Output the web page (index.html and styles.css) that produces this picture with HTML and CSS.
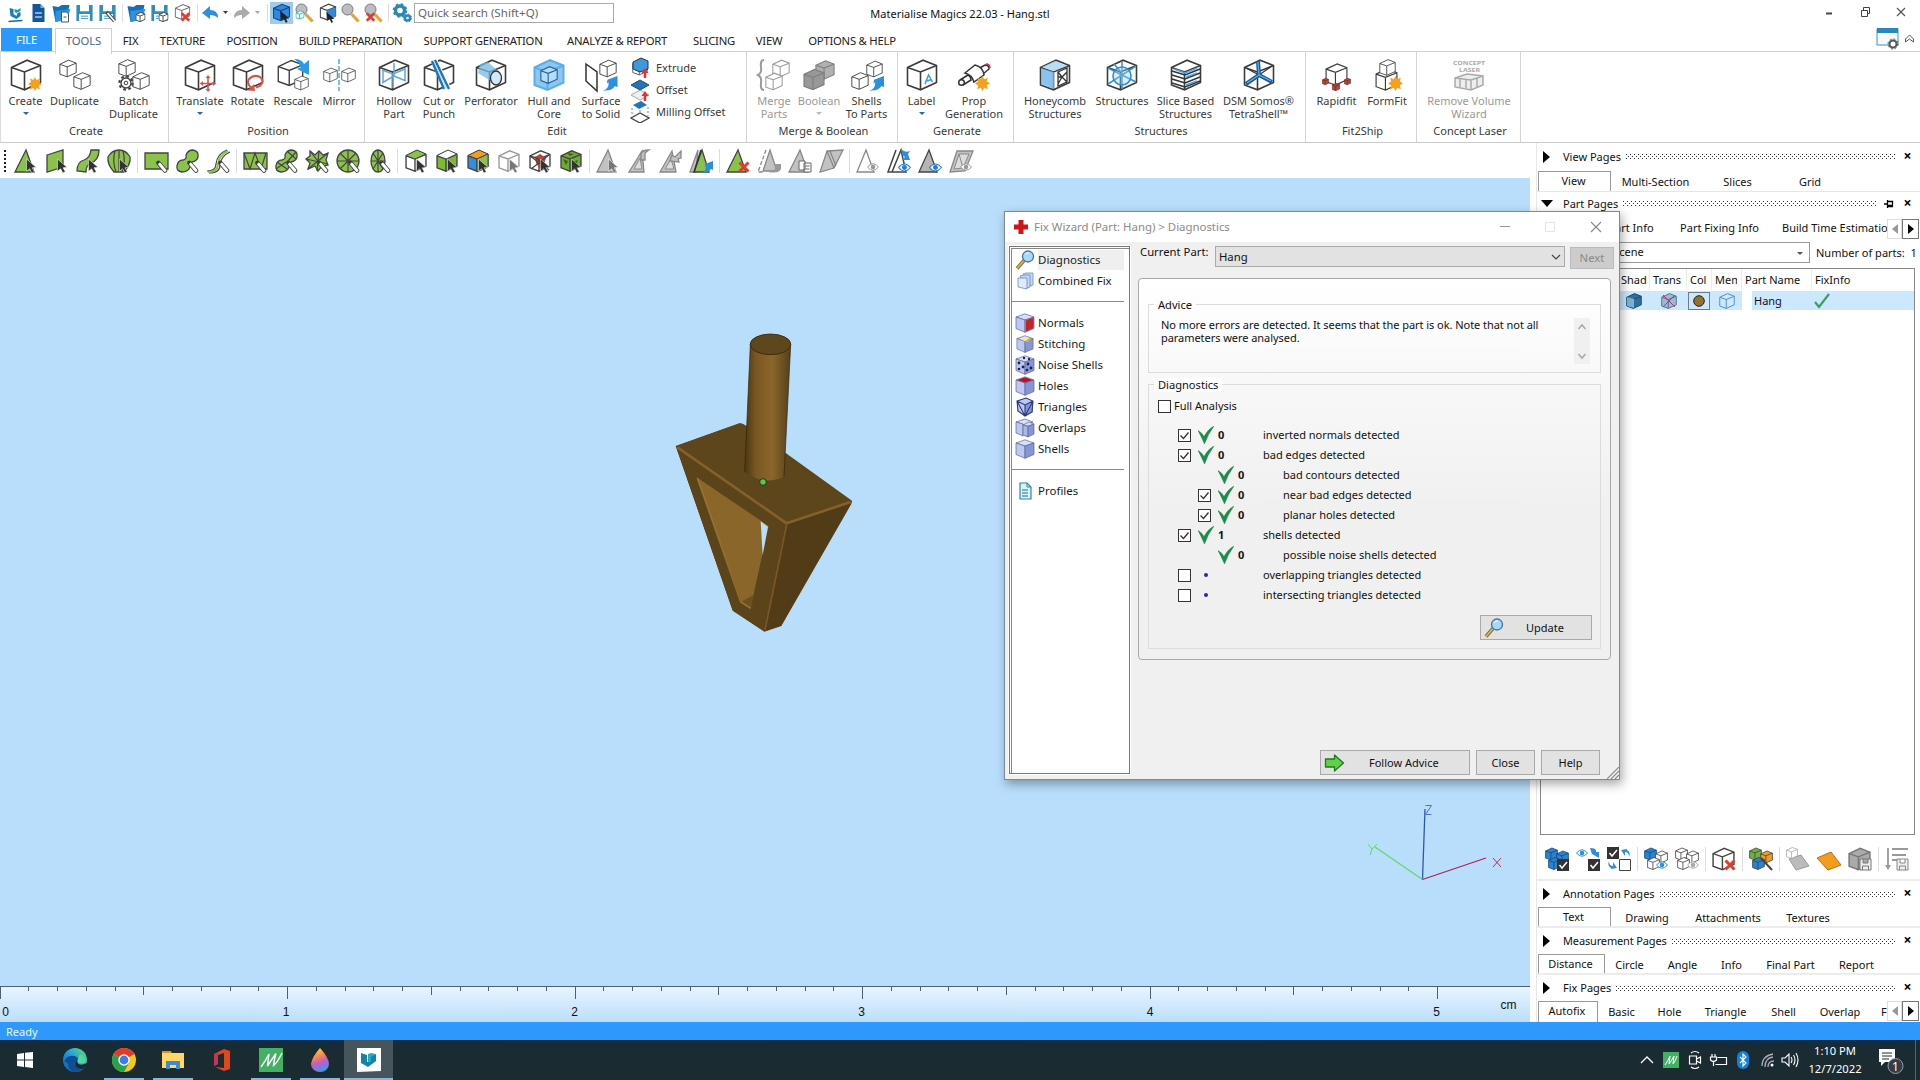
FILE: index.html
```html
<!DOCTYPE html>
<html lang="en">
<head>
<meta charset="utf-8">
<title>Materialise Magics 22.03 - Hang.stl</title>
<link rel="stylesheet" href="styles.css">
</head>
<body>
<svg class="defs" width="0" height="0">
  <defs>
    <symbol id="cube" viewBox="0 0 32 32"><path d="M1.500 8.500L17 1.200 30.500 6.500V23.500L14.500 30.800 1.500 26Z"/><path fill="none" d="M1.500 8.500L14.500 13 30.500 6.500M14.500 13V30.800"/></symbol>
    <symbol id="burst" viewBox="0 0 14 14"><path fill="#f5a11d" stroke="none" d="M7 0l1.500 3L12 1.600 11 5l3 2-3 1.700L12 12.400 8.700 11 7 14 5.400 11 2 12.400 3 8.800 0 7l3-2L2 1.600 5.500 3z"/></symbol>
    <symbol id="cur" viewBox="0 0 24 24"><path fill="#333" stroke="#fff" stroke-width=".5" d="M12.500 10l9.500 8.300-4 .5 2.300 4-2.500 1.100-2.100-4.100-3.200 2.500z"/></symbol>
    <symbol id="curg" viewBox="0 0 24 24"><path fill="#777" stroke="#fff" stroke-width=".5" d="M12.500 10l9.500 8.300-4 .5 2.300 4-2.500 1.100-2.100-4.100-3.200 2.500z"/></symbol>
    <symbol id="pen" viewBox="0 0 24 24"><path d="M14.500 14l6.500 7.500" stroke="#444" stroke-width="4.600" stroke-linecap="round"/><path d="M15.500 15l5.500 6.500" stroke="#fff" stroke-width="2.800" stroke-linecap="round"/><path d="M12.500 12l3 1.200-1.600 1.700z" fill="#333" stroke="none"/></symbol>
    <symbol id="eye" viewBox="0 0 12 8"><path d="M.5 4Q6-2.500 11.500 4 6 10.500 .5 4Z" fill="#fff" stroke="currentColor"/><circle cx="6" cy="4" r="2.300" fill="currentColor" stroke="none"/></symbol>
    <symbol id="redx" viewBox="0 0 12 12"><path d="M1.500 1.500l9 9M10.500 1.500l-9 9" stroke="#e23b30" stroke-width="3" fill="none"/></symbol>
    <symbol id="swirl" viewBox="0 0 12 12"><path d="M0 11.500Q5 11 5 5L3.500 6 4 3 12 0V9L10 8Q7 12.500 0 11.500Z" fill="#2b8fdd" stroke="none"/></symbol>
    <symbol id="floppy" viewBox="0 0 20 20"><path d="M1 1h18v18H1z" fill="#2f8cc4" stroke="none"/><path d="M5 1h10v7H5zM4 11h12v8H4z" fill="#fff" stroke="none"/><path d="M6 13.500h8M6 16h8" stroke="#2f8cc4"/></symbol>
    <symbol id="folder" viewBox="0 0 20 20"><path d="M1 3l6 1 3-2h8l-3 14-11 3z" fill="#1670b8" stroke="none"/><path d="M4 8l15-2-4 11-11 2z" fill="#2f92dc" stroke="none"/></symbol>
    <symbol id="lens" viewBox="0 0 20 20"><path d="M11 11l7 7.500" stroke="#e8a23a" stroke-width="3.200"/><circle cx="7" cy="6.500" r="5.500" fill="#b9bec2" stroke="#777"/></symbol>
    <symbol id="check" viewBox="0 0 16 18"><path d="M0 4.500Q4 6.500 6 10.500 10 3 16 0 10 8 6.500 18 3.500 11 0 4.500Z" fill="#1f8a4c" stroke="#1f8a4c" stroke-width=".5"/></symbol>
    <symbol id="scube" viewBox="0 0 20 20"><path d="M1 4L10 .8 19 4 10 7z" fill="#d7def5" stroke="#5a6596" stroke-width=".7"/><path d="M1 4l9 3v12.300L1 15.500z" fill="#bcc8f2" stroke="#5a6596" stroke-width=".7"/><path d="M19 4l-9 3v12.300l9-3.800z" fill="#8795d6" stroke="#5a6596" stroke-width=".7"/></symbol>
    <symbol id="wand" viewBox="0 0 20 20"><path d="M2 18.500l7-8" stroke="#7c6a3c" stroke-width="3.500"/><path d="M2 18.500l7-8" stroke="#d6b65c" stroke-width="1.800"/><circle cx="13" cy="6.500" r="5.500" fill="#a9d8f6" stroke="#3c78a8" stroke-width="1.300"/><path d="M10 5q1.500-2.500 4-2" stroke="#fff" fill="none"/></symbol>
    <symbol id="tick" viewBox="0 0 13 13"><path d="M1.500 5.500l3 3 5-6" fill="none" stroke="#333" stroke-width="1.300"/></symbol>
    <linearGradient id="rod" x1="0" x2="1"><stop offset="0" stop-color="#4a3613"/><stop offset=".25" stop-color="#7a5822"/><stop offset=".6" stop-color="#8b662b"/><stop offset="1" stop-color="#54401a"/></linearGradient>
    <linearGradient id="sky" x1="0" y1="0" x2="0" y2="1"><stop offset="0" stop-color="#e9f5fe"/><stop offset="1" stop-color="#bbdefb"/></linearGradient>
    <linearGradient id="edge" x1="0" y1="1" x2="1" y2="0"><stop offset="0" stop-color="#0c59a4"/><stop offset=".5" stop-color="#1d9be0"/><stop offset="1" stop-color="#6ee36a"/></linearGradient>
    <linearGradient id="drop" x1=".3" y1="0" x2=".6" y2="1"><stop offset="0" stop-color="#ffd34d"/><stop offset=".35" stop-color="#f58a4b"/><stop offset=".6" stop-color="#c45bc4"/><stop offset="1" stop-color="#2f9df0"/></linearGradient>
  </defs>
</svg>

<div class="app">
  <header class="titlebar">
    <div class="quick">
      <svg class="i20" viewBox="0 0 20 20"><path d="M4 5l4 1v5l3 2 1-3 3-1v4l-4 3-6-3z" fill="#1a7fb0"/><path d="M9 6l3 1 3-2v3l-4 2-2-1z" fill="#19a3b5"/><path d="M3 18.500l14-1" stroke="#1668a8" stroke-width="1.500"/></svg>
      <svg class="i20" viewBox="0 0 20 20"><path d="M4 1h8l4 4v14H4z" fill="#12579b"/><path d="M12 1v4h4z" fill="#7db4e0"/><path d="M6.500 10h7M6.500 14h7" stroke="#fff"/></svg>
      <svg class="i20" viewBox="0 0 20 20"><use href="#folder"/><path d="M10 9h5l2 2v8h-7z" fill="#fff" stroke="#555"/><path d="M12 14h3" stroke="#555"/></svg>
      <svg class="i20" viewBox="0 0 20 20"><use href="#floppy" x="1" width="18"/></svg>
      <svg class="i20" viewBox="0 0 20 20"><use href="#floppy" x="1" width="18"/><path d="M9 9l8 9" stroke="#444" stroke-width="3.500"/><path d="M10 10l7 8" stroke="#fff" stroke-width="1.800"/></svg>
      <i class="qsep"></i>
      <svg class="i20" viewBox="0 0 20 20"><use href="#folder"/><use href="#cube" x="9" y="9" width="10" height="10" fill="#fff" stroke="#444" stroke-width="3"/></svg>
      <svg class="i20" viewBox="0 0 20 20"><use href="#floppy" x="1" width="18"/><use href="#cube" x="9" y="9" width="10" height="10" fill="#fff" stroke="#444" stroke-width="3"/></svg>
      <svg class="i20" viewBox="0 0 20 20"><use href="#cube" x="2" y="0" width="16" height="18" fill="#fff" stroke="#666" stroke-width="2"/><use href="#redx" x="8" y="9" width="10" height="10"/></svg>
      <i class="qsep"></i>
      <svg class="undo" viewBox="0 0 30 20"><path d="M1 10L9 3v4q8 0 8 8-3-3-8-3v4z" fill="#2d8fd8"/><path d="M22 8h5l-2.500 3z" fill="#246"/></svg>
      <svg class="undo" viewBox="0 0 30 20"><path d="M17 10L9 3v4q-8 0-8 8 3-3 8-3v4z" fill="#aaa"/><path d="M22 8h5l-2.500 3z" fill="#aaa"/></svg>
      <i class="qsep"></i>
      <svg class="i20 on" viewBox="0 0 20 20"><use href="#cube" x="2" y="1" width="16" height="17" fill="#2c8be0" stroke="#124a86" stroke-width="2"/><path d="M9 8l8 7h-3l1.500 3-1.500 1-2-4-2 2z" fill="#222"/></svg>
      <svg class="i20" viewBox="0 0 20 20"><use href="#lens"/><use href="#cube" x="1" y="7" width="9" height="10" fill="#dff" stroke="#4aa" stroke-width="3"/></svg>
      <svg class="i20" viewBox="0 0 20 20"><use href="#cube" x="2" y="0" width="17" height="18" fill="#fff" stroke="#444" stroke-width="2.200"/><path d="M10 7.500l8-3v8.500l-8 4z" fill="#2c8be0"/><path d="M9 9l8 7h-3l1.500 3-1.500 1-2-4-2 2z" fill="#222"/></svg>
      <svg class="i20" viewBox="0 0 20 20"><use href="#lens"/></svg>
      <svg class="i20" viewBox="0 0 20 20"><use href="#lens"/><use href="#redx" x="2" y="9" width="10" height="10"/></svg>
      <i class="qsep"></i>
      <svg class="i20" viewBox="0 0 20 20"><circle cx="7.500" cy="7.500" r="4.500" fill="none" stroke="#2a87bd" stroke-width="3.500"/><circle cx="7.500" cy="7.500" r="6.300" fill="none" stroke="#2a87bd" stroke-width="2" stroke-dasharray="2.500 2.450"/><circle cx="15" cy="15" r="2.600" fill="none" stroke="#2a87bd" stroke-width="2.500"/><circle cx="15" cy="15" r="4" fill="none" stroke="#2a87bd" stroke-dasharray="1.500 1.640"/></svg>
    </div>
    <div class="search">Quick search (Shift+Q)</div>
    <div class="apptitle">Materialise Magics 22.03 - Hang.stl</div>
    <svg class="winctl" viewBox="0 0 92 20"><path d="M1 10.500h6" stroke="#444" stroke-width="2"/><path d="M36.500 7.500h6v6h-6zM38.500 7V4.500h6v6H43" fill="none" stroke="#444"/><path d="M72 5l8 8M80 5l-8 8" stroke="#555" stroke-width="1.200"/></svg>
  </header>

  <nav class="tabs">
    <b class="file">FILE</b><b class="cur">TOOLS</b><b>FIX</b><b>TEXTURE</b><b>POSITION</b><b class="tight">BUILD PREPARATION</b><b>SUPPORT GENERATION</b><b>ANALYZE &amp; REPORT</b><b>SLICING</b><b>VIEW</b><b>OPTIONS &amp; HELP</b>
    <svg class="tabctl" viewBox="0 0 44 24"><path d="M1 1h21v16H1z" fill="#f6fafd" stroke="#3f93c4"/><path d="M1 0h21v5H1z" fill="#2a87bd"/><circle cx="17" cy="16" r="3.500" fill="#fff" stroke="#555" stroke-width="2"/><circle cx="17" cy="16" r="5" fill="none" stroke="#555" stroke-dasharray="2 1.900"/><path d="M29.500 11l4-4 4 4v3l-4-3-4 3z" fill="#fff" stroke="#555"/></svg>
  </nav>

  <section class="ribbon">
    <div class="grp g1">
      <div class="btns">
        <div class="btn"><svg viewBox="0 0 32 32"><use class="k" href="#cube"/><use href="#burst" x="18" y="18" width="14" height="14"/></svg><span>Create</span><i class="car"></i></div>
        <div class="btn"><svg viewBox="0 0 32 32"><use class="k" href="#cube" width="18" height="19"/><use class="k" href="#cube" x="14" y="12" width="18" height="20"/></svg><span>Duplicate</span></div>
        <div class="btn"><svg viewBox="0 0 32 32"><use class="k" href="#cube" width="18" height="18"/><use class="k" href="#cube" x="14" y="12" width="18" height="20"/><circle cx="8" cy="24" r="5" fill="#fff" stroke="#444" stroke-width="1.400"/><circle cx="8" cy="24" r="6.600" fill="none" stroke="#444" stroke-width="2.200" stroke-dasharray="2.700 2.480"/><circle cx="8" cy="24" r="1.800" fill="#fff" stroke="#444"/></svg><span>Batch<br>Duplicate</span></div>
      </div><div class="cap">Create</div>
    </div>
    <div class="grp g2">
      <div class="btns">
        <div class="btn"><svg viewBox="0 0 32 32"><use class="k" href="#cube"/><path d="M24 17v15M16.500 24.500h15" stroke="#d9534a" stroke-width="1.600"/><path d="M24 16l-2.500 3h5zM24 33l-2.500-3h5zM16 24.500l3-2.500v5zM32 24.500l-3-2.500v5z" fill="#d9534a"/></svg><span>Translate</span><i class="car"></i></div>
        <div class="btn"><svg viewBox="0 0 32 32"><use class="k" href="#cube"/><path d="M20 29Q14 25 17 20 22 15 28 18 33 22 28 27L24 28.500" fill="none" stroke="#d9534a" stroke-width="2"/><path d="M16 31.500l7 .5-1-7z" fill="#d9534a"/></svg><span>Rotate</span></div>
        <div class="btn"><svg viewBox="0 0 32 32"><use class="k" href="#cube" width="27" height="28"/><use class="k" href="#cube" x="17" y="16" width="15" height="16"/><path d="M17 0q8 0 10 5l5-4v15L20 10l4-2q-2-5-7-8z" fill="#2b99ee"/></svg><span>Rescale</span></div>
        <div class="btn"><svg viewBox="0 0 32 32"><use class="k" href="#cube" y="7" width="15" height="18"/><use class="k" href="#cube" x="18" y="7" width="15" height="18"/><path d="M16 0v32" stroke="#49a3cf" stroke-width="1.400" stroke-dasharray="5 2"/></svg><span>Mirror</span></div>
      </div><div class="cap">Position</div>
    </div>
    <div class="grp g3">
      <div class="btns">
        <div class="btn"><svg viewBox="0 0 32 32"><use class="k" href="#cube"/><path d="M4 11l11 4 12-5M15 15v14M16 4v13L4 24M16 17l12 5M5 10v14M27 9v13" stroke="#61a9d4" stroke-width="1.500" fill="none"/></svg><span>Hollow<br>Part</span></div>
        <div class="btn"><svg viewBox="0 0 32 32"><use class="k" href="#cube"/><path d="M7 1l14 30h8L14 0z" fill="#fff"/><path d="M9 2l12 28M12 1l14 29" stroke="#1f76b4" stroke-width="2.400"/><path d="M10.500 1.500l13 28" stroke="#9fd0f0"/></svg><span>Cut or<br>Punch</span></div>
        <div class="btn"><svg viewBox="0 0 32 32"><use class="k" href="#cube"/><path d="M5 5l8-2 12 11-6 10L3 14z" fill="#74b9e8" opacity=".75"/><ellipse cx="21" cy="19" rx="5.500" ry="7" fill="#cfe8fa" stroke="#333" stroke-width="1.300"/></svg><span>Perforator</span></div>
        <div class="btn"><svg viewBox="0 0 32 32"><use href="#cube" fill="#8cc6f2" stroke="#5aaeea" stroke-width="2"/><use href="#cube" x="7" y="6.500" width="18" height="19" fill="#b5dcf8" stroke="#27638f" stroke-width="2"/></svg><span>Hull and<br>Core</span></div>
        <div class="btn"><svg viewBox="0 0 32 32"><path d="M1 5l11 8v19L1 22z" fill="#fff" stroke="#333" stroke-width="1.500"/><use class="k" href="#cube" x="14" width="18" height="19"/><use href="#swirl" x="17" y="17" width="16" height="15"/></svg><span>Surface<br>to Solid</span></div>
        <div class="list">
          <div><svg viewBox="0 0 20 22"><use class="k" href="#cube" x="2" width="16" height="21"/><path d="M3 5l8-4 7 3v8l-8 3-7-3z" fill="#3f97dc" stroke="#234"/><path d="M15 21v-6" stroke="#d33" stroke-width="2.500"/><path d="M11.500 16l3.500-5 3.500 5z" fill="#d33"/></svg>Extrude</div>
          <div><svg viewBox="0 0 20 22"><path d="M1 16l9-5 9 5-9 5z" fill="#eee" stroke="#aaa"/><path d="M1 6l9-5 9 5-9 5z" fill="#2773b8" stroke="#1a4f82"/><path d="M15 22v-6" stroke="#d33" stroke-width="2.500"/><path d="M11.500 17l3.500-5 3.500 5z" fill="#d33"/></svg>Offset</div>
          <div><svg viewBox="0 0 20 22"><path d="M1 17l9-5 9 5-9 5z" fill="#fff" stroke="#444" stroke-width="1.300"/><path d="M3 4l8-4 6 4-8 4z" fill="#2773b8"/><path d="M2 7v8M18 6v9M10 9v3" stroke="#3f97dc" stroke-dasharray="2 2"/></svg>Milling Offset</div>
        </div>
      </div><div class="cap">Edit</div>
    </div>
    <div class="grp g4">
      <div class="btns">
        <div class="btn dis"><svg viewBox="0 0 32 32"><path d="M6 1Q2 1 3 8 4 14 0 16q4 2 3 8-1 7 3 7" fill="none" stroke="#999" stroke-width="2"/><use class="g" href="#cube" x="14" width="18" height="19"/><use class="g" href="#cube" x="7" y="13" width="18" height="19"/></svg><span>Merge<br>Parts</span></div>
        <div class="btn dis"><svg viewBox="0 0 32 32"><g fill="#b0b0b0" stroke="#808080" stroke-width="1.800"><use href="#cube" x="12" width="20" height="22"/><use href="#cube" y="9" width="22" height="23" fill="#989898"/></g></svg><span>Boolean</span><i class="car"></i></div>
        <div class="btn"><svg viewBox="0 0 32 32"><use class="k" href="#cube" x="15" width="17" height="20"/><use class="k" href="#cube" y="12" width="18" height="20"/><use href="#swirl" x="18" y="17" width="15" height="15"/></svg><span>Shells<br>To Parts</span></div>
      </div><div class="cap">Merge &amp; Boolean</div>
    </div>
    <div class="grp g5">
      <div class="btns">
        <div class="btn"><svg viewBox="0 0 32 32"><use class="k" href="#cube"/><path d="M19 25l3.500-9 4 7M20.500 22l5-1.500" fill="none" stroke="#3f9ad6" stroke-width="1.500"/></svg><span>Label</span><i class="car"></i></div>
        <div class="btn"><svg viewBox="0 0 32 32"><g fill="#fff" stroke="#333" stroke-width="1.500"><path d="M20 10l7-4q4 0 4 4l-6 5"/><path d="M7 14L17 6q8 2 9 10l-10 7q-2-7-9-9z"/><path d="M2 21l8-5q3 2 3 5l-8 5"/><circle cx="3.500" cy="23.500" r="2.800"/></g><path d="M28 5q4 0 4 4" stroke="#c33" fill="none" stroke-width="1.500"/><use href="#burst" x="17" y="17" width="15" height="15"/></svg><span>Prop<br>Generation</span></div>
      </div><div class="cap">Generate</div>
    </div>
    <div class="grp g6">
      <div class="btns">
        <div class="btn"><svg viewBox="0 0 32 32"><use class="k" href="#cube"/><path d="M2 9l13 4v17L2 25z" fill="#6db5ea" opacity=".8"/><path d="M3 8l13-6 12 5-13 5z" fill="#a9d5f5" opacity=".8"/><path d="M19 13l9-4v14l-9 4zM19 18l4 0 5-5M23 18l5 5M23 18l-4 7M19 13l4 5" fill="#fff" stroke="#333" stroke-width="1.300"/></svg><span>Honeycomb<br>Structures</span></div>
        <div class="btn"><svg viewBox="0 0 32 32"><use class="k" href="#cube"/><path d="M2 9l28 14M30 7L2 25M15 13l-7-8M16 2v28" stroke="#2e90cc" stroke-width="1.500" fill="none"/><circle cx="16" cy="17" r="9" fill="#9fd2f3" fill-opacity=".4" stroke="#2e90cc" stroke-width="1.600"/></svg><span>Structures</span></div>
        <div class="btn"><svg viewBox="0 0 32 32"><use class="k" href="#cube"/><path d="M2 12l13 4 15-6M2 16l13 4 15-6M2 20l13 4 15-6M2 24l13 4 15-6" stroke="#333" stroke-width="1.500" fill="none"/><path d="M4 10l11 4 12-5M16 18l11-4M16 26l11-4" stroke="#4ba3dd" stroke-width="1.500" fill="none"/></svg><span>Slice Based<br>Structures</span></div>
        <div class="btn"><svg viewBox="0 0 32 32"><use href="#cube" class="k"/><path d="M3 9l13 7L29 7M3 25l13-9 12 7" stroke="#333" stroke-width="1.200" fill="none"/><path d="M15 2l1 14L3 25M16 16l13 7" stroke="#1d5a94" stroke-width="4" fill="none"/><path d="M15 3l1 13L4 24M16 16l12 6" stroke="#5db0ea" stroke-width="1.200" fill="none"/></svg><span>DSM Somos®<br>TetraShell™</span></div>
      </div><div class="cap">Structures</div>
    </div>
    <div class="grp g7">
      <div class="btns">
        <div class="btn"><svg viewBox="0 0 32 32"><use class="k" href="#cube" x="4" y="4" width="23" height="23"/><g fill="#b9443e" stroke="#6d211e" stroke-width="2.500"><use href="#cube" x="1" y="18" width="7" height="9"/><use href="#cube" x="11" y="24" width="8" height="8"/><use href="#cube" x="23" y="18" width="7" height="9"/></g></svg><span>Rapidfit</span></div>
        <div class="btn"><svg viewBox="0 0 32 32"><use class="k" href="#cube" x="1" y="9" width="29" height="23"/><use class="k" href="#cube" x="8" width="17" height="17"/><use href="#burst" x="17" y="17" width="15" height="15"/></svg><span>FormFit</span></div>
      </div><div class="cap">Fit2Ship</div>
    </div>
    <div class="grp g8">
      <div class="btns">
        <div class="btn dis"><svg viewBox="0 0 32 32"><text class="cl" x="0" y="6" textLength="32" lengthAdjust="spacingAndGlyphs">CONCEPT</text><text class="cl" x="6" y="12.500" textLength="21" lengthAdjust="spacingAndGlyphs">LASER</text><path d="M2 19l12-4 16 2v9l-12 5-16-3z" fill="#eee" stroke="#aaa" stroke-width="1.500"/><path d="M2 19l16 2 12-4M18 21v10M7 20v8M13 21v8M24 19v9" stroke="#aaa" stroke-width="1.500" fill="none"/></svg><span>Remove Volume<br>Wizard</span></div>
      </div><div class="cap">Concept Laser</div>
    </div>
  </section>

  <main class="work">
    <div class="left">
      <div class="toolbar">
        <i class="grip"></i>
        <svg class="t"><path class="gr" d="M12 1L1 23H20z"/><use href="#cur"/></svg>
        <svg class="t"><path class="gr" d="M2 6L18 1V18L2 23z"/><use href="#cur"/></svg>
        <svg class="t"><path class="gr" d="M1 22q0-9 7-11Q14 9 15 1h8q0 10-8 13-5 2-5 9z"/><use href="#cur"/></svg>
        <svg class="t"><path class="gr" d="M7 23Q0 15 1 8 5 1 12 1t11 7q1 7-6 15z"/><path class="gl" d="M9 23Q5 12 8 2M15 23q4-11 1-21M12 1v22"/><use href="#cur"/></svg>
        <i class="sep"></i>
        <svg class="t"><path class="gr" d="M1 4H24V20H1z"/><use href="#pen"/></svg>
        <svg class="t"><path class="gr" d="M11 6q2-5 7-5 6 1 5 7-1 4-6 5-2 1-2 5-2 5-8 5-6-1-5-6 1-6 6-6 4-1 3-5z"/><use href="#pen"/></svg>
        <svg class="t"><path class="gl" d="M1 22q9 0 9-7 1-10 11-14M3 24q11 0 11-8Q15 7 24 3"/><path d="M2 23q10 0 10-8 1-9 10-13" stroke="#8bc34a" stroke-width="2" fill="none"/><use href="#pen"/></svg>
        <i class="sep"></i>
        <svg class="t"><path class="gr" d="M1 4H24V20H1z"/><path class="gl" d="M1 4l6 16L12 4l6 16 5-16"/><use href="#pen"/></svg>
        <svg class="t"><path class="gr" d="M11 6q2-5 7-5 6 1 5 7-1 4-6 5-2 1-2 5-2 5-8 5-6-1-5-6 1-6 6-6 4-1 3-5z"/><path class="gl" d="M14 3l8 7M22 3l-9 10M3 13l10 7M2 20l10-7"/><use href="#pen"/></svg>
        <svg class="t"><path class="gr" d="M5 2l5 4 4-4 4 4 5-2-2 7 2 5-6 1-4 5-3-5-7 3 2-6-4-4 4-3z"/><path class="gl" d="M5 2l14 18M23 4L3 20M1 10l22 5M14 2l-2 20"/><use href="#pen"/></svg>
        <svg class="t"><circle class="gr" cx="12" cy="12" r="11"/><path class="gl" d="M12 1v22M1 12h22M4 4l16 16M20 4L4 20"/><use href="#pen"/></svg>
        <svg class="t"><ellipse class="gr" cx="11" cy="12" rx="7" ry="11"/><path class="gl" d="M11 1v22M4 12h14M6 4l10 16M16 4L6 20"/><use href="#pen"/></svg>
        <i class="sep"></i>
        <svg class="t"><use href="#cube" x="1" width="22" height="24" fill="#fff" class="kt"/><path d="M2 6.500L13 1l9 4-11 5z" fill="#8bc34a" stroke="#444"/><use href="#cur"/></svg>
        <svg class="t"><use href="#cube" x="1" width="22" height="24" fill="#7cb83a" class="kt"/><path d="M2 6.500L13 1l9 4-11 5z" fill="#fff" stroke="#444"/><use href="#cur"/></svg>
        <svg class="t"><use href="#cube" x="1" width="22" height="24" fill="#2f8fdd" class="kt"/><path d="M2 6.500L13 1l9 4-11 5z" fill="#f39c1f" stroke="#444"/><path d="M11 10l11-5v13l-11 5z" fill="#8bc34a" stroke="#444"/><use href="#cur"/></svg>
        <svg class="t"><use href="#cube" x="1" width="22" height="24" fill="#fff" stroke="#999" stroke-width="2"/><use href="#curg"/></svg>
        <svg class="t"><use href="#cube" x="1" width="22" height="24" fill="#fff" class="kt"/><path d="M7 8l5-3 6 4-2 6-4 5-4-6z" fill="#b5462f"/><path class="gl" d="M2 7l19 14M21 6L3 20M7 8l9 7"/><use href="#cur"/></svg>
        <svg class="t"><use href="#cube" x="1" width="22" height="24" fill="#6eaa35" class="kt"/><path d="M4 10l5 2-2 4zM14 13l5-2-3 7zM8 4l7 1-4 2z" fill="#3d5f22"/><use href="#cur"/></svg>
        <i class="sep"></i>
        <svg class="t"><path class="dg" d="M12 1L1 23H20z"/><use href="#curg"/></svg>
        <svg class="t"><path class="dg" d="M15 2L2 23H17z"/><path d="M13 9L7 20h8z" fill="#ddd" stroke="#888"/><path class="dg" d="M14 11V5q1-4 8-4l-4 3v7z"/></svg>
        <svg class="t"><path class="dg" d="M14 2L2 23H18z"/><path d="M13 10L7 20h9z" fill="#ddd" stroke="#888"/><path class="dg" d="M12 12l2-6 3 2 6-6v7l-3 1 1 3z"/></svg>
        <svg class="t"><path class="dg" d="M9 1L1 23h6z"/><path class="gr" d="M13 1L5 23h15z"/><path d="M12 1L5 23" stroke="#333" stroke-width="1.500"/><use href="#swirl" x="12" y="12" width="12" height="12"/></svg>
        <i class="sep"></i>
        <svg class="t"><path class="gr" d="M12 1L1 23H20z"/><use href="#redx" x="12" y="12" width="12" height="12"/></svg>
        <svg class="t"><path class="dg" d="M13 1L6 22h14z"/><path d="M9 1L1 23h5" fill="none" stroke="#888" stroke-width="1.300" stroke-dasharray="4 2"/><path d="M11 23q9 0 7-8h6v5q-2 5-13 3z" fill="#999"/></svg>
        <svg class="t"><path class="dg" d="M12 1L1 23H20z"/><path d="M11 12h6v9h-6zM16 14h7v9h-7z" fill="#fff" stroke="#666"/><path d="M17.500 17h4M17.500 20h4" stroke="#666"/></svg>
        <svg class="t"><path class="dg" d="M8 2L24 1 15 19 1 23z"/><path d="M8 2l7 17M11 2l6 15" stroke="#777" fill="none"/></svg>
        <i class="sep"></i>
        <svg class="t"><path d="M10 1L1 23H18z" fill="#fff" stroke="#888" stroke-width="1.300"/><use href="#eye" x="11" y="14" width="12" height="8" color="#999"/></svg>
        <svg class="t"><path d="M9 1L1 23h5M14 1L5 23h14z" fill="#fff" stroke="#444" stroke-width="1.500"/><path d="M14 0q4 4 9 2l-2 3 2 6h-8l3-3q-4-2-4-8z" fill="#2b8fdd"/><use href="#eye" x="11" y="14" width="13" height="9" color="#1f7fd0"/></svg>
        <svg class="t"><path d="M11 1L1 23H19z" fill="#b5b5b5" stroke="#444" stroke-width="1.300"/><use href="#eye" x="11" y="14" width="13" height="9" color="#1f7fd0"/></svg>
        <svg class="t"><path class="dg" d="M8 2H24L16 22 1 23z"/><path d="M10 5h10l-6 14-9 1z" fill="#ddd" stroke="#888"/><path d="M10 5l4 14" stroke="#888"/><use href="#eye" x="11" y="14" width="12" height="8" color="#999"/></svg>
      </div>

      <div class="viewport">
        <svg class="model" viewBox="0 0 720 1020">
          <path d="M107 408L298 340Q306 338 316 346L438 430 636 572 634 582 424 948 373 965 278 902Z" fill="#5c441b"/>
          <path d="M109 412L440 644 373 964 278 901Z" fill="#5b431a"/>
          <path d="M440 642L636 574 423 947 373 964Z" fill="#513c17"/>
          <path d="M109 408L300 340 634 574 440 640Z" fill="#5d451c"/>
          <path d="M170 502L386 648 331 898 306 880Z" fill="#8a662b"/>
          <path d="M362 634L384 650 368 736Z" fill="#b9defb"/>
          <path d="M306 874L340 856 331 900Z" fill="#6d4f20"/>
          <path d="M172 504L302 876 332 894" fill="none" stroke="#a37c3b" stroke-width="5" opacity=".7"/>
          <path d="M112 412L440 640 632 576" fill="none" stroke="#84602a" stroke-width="8" stroke-linejoin="round"/>
          <path d="M440 644L375 960" stroke="#7a5825" stroke-width="5"/>
          <path d="M331 100L452 106 432 500Q372 528 314 486Z" fill="url(#rod)"/>
          <path d="M331 104L314 486M452 106L432 500" stroke="#2f230c" stroke-width="2"/>
          <ellipse cx="391.500" cy="103" rx="61" ry="31" fill="#5f471d" stroke="#33260e" stroke-width="2.500"/>
          <circle cx="369" cy="516" r="10" fill="#58c94d" stroke="#1a3a12" stroke-width="3"/>
        </svg>
        <svg class="axes" viewBox="0 0 150 90">
          <path d="M57.500 75.500L60 5" stroke="#2b58b0" stroke-width="1.300"/><path d="M60.500 1.500h6l-6 9h6" fill="none" stroke="#4a78b8"/>
          <path d="M57.500 75.500L10 43" stroke="#61d86a" stroke-width="1.300"/><path d="M3 40l4 5 5-5M7 45l-2 6" fill="none" stroke="#61d86a"/>
          <path d="M57.500 75.500L121 54" stroke="#b02050" stroke-width="1.300"/><path d="M128 54l8 9M136 54l-8 9" fill="none" stroke="#c22a5a"/>
        </svg>
      </div>
      <svg class="ruler" viewBox="0 0 1530 36">
        <rect width="1530" height="36" fill="url(#sky)"/>
        <path d="M0 .5H1530" stroke="#4b6075"/>
        <path stroke="#4b6075" d="M.5 0v13M28.500 0v5M57.500 0v5M86.500 0v5M115.500 0v5M143.500 0v9M172.500 0v5M201.500 0v5M230.500 0v5M258.500 0v5M287.500 0v13M316.500 0v5M345.500 0v5M373.500 0v5M402.500 0v5M431.500 0v9M460.500 0v5M488.500 0v5M517.500 0v5M546.500 0v5M575.500 0v13M603.500 0v5M632.500 0v5M661.500 0v5M690.500 0v5M718.500 0v9M747.500 0v5M776.500 0v5M805.500 0v5M833.500 0v5M862.500 0v13M891.500 0v5M920.500 0v5M948.500 0v5M977.500 0v5M1006.500 0v9M1035.500 0v5M1063.500 0v5M1092.500 0v5M1121.500 0v5M1150.500 0v13M1178.500 0v5M1207.500 0v5M1236.500 0v5M1265.500 0v5M1293.500 0v9M1322.500 0v5M1351.500 0v5M1380.500 0v5M1408.500 0v5M1437.500 0v13"/>
        <g class="num"><text x="5.500" y="29.500">0</text><text x="286" y="29.500">1</text><text x="574.500" y="29.500">2</text><text x="861.500" y="29.500">3</text><text x="1150" y="29.500">4</text><text x="1436.500" y="29.500">5</text><text x="1508.500" y="23">cm</text></g>
      </svg>
    </div>

    <aside class="panel">
      <div class="sec"><i class="tri"></i>View Pages<i class="dots"></i><b>×</b></div>
      <div class="ptabs pt1"><span class="sel">View</span><span>Multi-Section</span><span>Slices</span><span>Grid</span></div>
      <div class="sec s2"><i class="tri down"></i>Part Pages<i class="dots"></i><svg class="pin" viewBox="0 0 10 10"><path d="M0 5h3M3.500 1v8M3.500 2.500h5v4h-5M3 7.500h6" fill="none" stroke="#000" stroke-width="1.300"/></svg><b>×</b></div>
      <div class="ptabs pt2"><span>Part Info</span><span>Part Fixing Info</span><span class="clip">Build Time Estimation</span><i class="arr off"><i></i></i><i class="arr"><i></i></i></div>
      <div class="filter"><div class="combo">scene<i></i></div><span>Number of parts:&nbsp; 1</span></div>
      <div class="table">
        <div class="tr th"><i></i><span>Shad</span><span>Trans</span><span>Col</span><span>Mem</span><span>Part Name</span><span>FixInfo</span></div>
        <div class="tr row"><i></i>
          <svg viewBox="0 0 16 16"><use href="#cube" width="16" height="16" fill="#2f6f9f" stroke="#1d4a70" stroke-width="2"/><path d="M1 4l7 2v9l-7-2z" fill="#7fb0d2"/></svg>
          <svg class="tr8" viewBox="0 0 16 16"><use href="#cube" width="16" height="16" fill="#9fb8d8" stroke="#5b7094" stroke-width="2"/><path d="M2 2l12 12M14 2L2 14" stroke="#a04060"/></svg>
          <svg class="col" viewBox="0 0 22 18"><rect x=".5" y=".5" width="21" height="17" fill="none" stroke="#111" stroke-dasharray="1 1"/><circle cx="11" cy="9" r="5.300" fill="#95702f" stroke="#222"/></svg>
          <svg class="mem" viewBox="0 0 16 16"><use href="#cube" width="16" height="16" fill="#cfe8fb" stroke="#4f93c8" stroke-width="2"/></svg>
          <span class="nm">Hang</span>
          <svg class="ok" viewBox="0 0 16 16"><path d="M1 9l4 5L15 1" fill="none" stroke="#3f9e62" stroke-width="2.200"/></svg>
        </div>
      </div>
      <div class="ptools">
        <svg class="t"><g fill="#2c82cf" stroke="#174a7c" stroke-width="2"><use href="#cube" width="13" height="14"/><use href="#cube" x="11" y="3" width="13" height="14"/><use href="#cube" x="3" y="9" width="13" height="15"/></g><path class="cb" d="M12 12h12v12H12z"/><path class="ct" d="M14.500 18l2.500 3 5-6"/></svg>
        <svg class="t"><use href="#eye" y="2" width="12" height="8" color="#2b8fdd"/><path d="M14 1q7 0 6 4h3v6l-7-4z" fill="#2b8fdd"/><path class="cb" d="M12 12h12v12H12z"/><path class="ct" d="M14.500 18l2.500 3 5-6"/></svg>
        <svg class="t"><path class="cb" d="M0 0h12v12H0z"/><path class="ct" d="M2.500 6l2.500 3 5-6"/><path d="M22 10q0-5-4-5V9l-4-6 6-1v1q4 2 2 7zM2 14q0 5 4 5v-4l4 6-6 1v-1q-4-2-2-7z" fill="#2b8fdd"/><path d="M12.500 12.500h11v11h-11z" fill="#fff" stroke="#444"/></svg>
        <i class="sep"></i>
        <svg class="t"><use href="#cube" width="13" height="14" fill="#2c82cf" stroke="#174a7c" stroke-width="2"/><use class="kt" fill="#fff" href="#cube" x="11" y="3" width="13" height="14"/><use class="kt" fill="#fff" href="#cube" x="3" y="9" width="13" height="15"/><use href="#eye" x="12" y="14" width="12" height="8" color="#2b8fdd"/></svg>
        <svg class="t"><use class="kt" fill="#fff" href="#cube" width="13" height="14"/><use class="kt" fill="#fff" href="#cube" x="11" y="3" width="13" height="14"/><use class="kt" fill="#fff" href="#cube" x="2" y="9" width="13" height="15"/><use href="#eye" x="12" y="14" width="12" height="8" color="#aaa"/></svg>
        <i class="sep"></i>
        <svg class="t"><use class="kt" fill="#fff" href="#cube" x="0" width="23" height="24"/><use href="#redx" x="12" y="12" width="12" height="12"/></svg>
        <i class="sep"></i>
        <svg class="t"><use class="kt" fill="#6db33f" href="#cube" width="13" height="14"/><use class="kt" fill="#f39c1f" href="#cube" x="11" y="3" width="13" height="14"/><use class="kt" fill="#2c82cf" href="#cube" x="3" y="9" width="13" height="15"/><path d="M12 11l11 12" stroke="#444" stroke-width="2"/></svg>
        <i class="sep"></i>
        <svg class="t"><path d="M3 12l12-4 8 11-13 4z" fill="#bbb" stroke="#999"/><use class="g" href="#cube" width="12" height="12"/></svg>
        <svg class="t"><path d="M0 11l14-6 10 13-13 5z" fill="#f39c1f" stroke="#b87010"/></svg>
        <svg class="t"><use href="#cube" width="23" height="24" fill="#aaa" stroke="#777" stroke-width="2"/><path d="M12 12h11v11H12zM15 12v4h5v-4M14.500 23v-4h6v4" fill="#eee" stroke="#777"/></svg>
        <i class="sep"></i>
        <svg class="t"><path d="M3 1v19M7 2h16M7 8h14M7 13h5" stroke="#999" stroke-width="1.800"/><path d="M0 18h6l-3 5z" fill="#999"/><path d="M12 12h11v11H12zM15 12v4h5v-4M14.500 23v-4h6v4" fill="#eee" stroke="#888"/></svg>
      </div>
      <div class="sec s3"><i class="tri"></i>Annotation Pages<i class="dots"></i><b>×</b></div>
      <div class="ptabs pt3"><span class="sel">Text</span><span>Drawing</span><span>Attachments</span><span>Textures</span></div>
      <div class="sec s3 tight"><i class="tri"></i>Measurement Pages<i class="dots"></i><b>×</b></div>
      <div class="ptabs pt4"><span class="sel">Distance</span><span>Circle</span><span>Angle</span><span>Info</span><span>Final Part</span><span>Report</span></div>
      <div class="sec s3"><i class="tri"></i>Fix Pages<i class="dots"></i><b>×</b></div>
      <div class="ptabs pt5"><span class="sel">Autofix</span><span>Basic</span><span>Hole</span><span>Triangle</span><span>Shell</span><span>Overlap</span><span class="clip">F</span><i class="arr off"><i></i></i><i class="arr"><i></i></i></div>
    </aside>
  </main>

  <div class="status">Ready</div>

  <footer class="taskbar">
    <div class="slot"><svg viewBox="0 0 24 24"><path d="M4 6l7-1v6.500H4zM12 4.800L20 4v7.500h-8zM4 12.500h7V19l-7-1zM12 12.500h8V20l-8-1z" fill="#fff"/></svg></div>
    <div class="slot"><svg viewBox="0 0 24 24"><circle cx="12" cy="12" r="12" fill="url(#edge)"/><path d="M1 15Q3 6 12 8q5 2 3 7-3 0-4 1 3 4 10 2-3 6-10 6-6-2-6-8-3-4-4-1z" fill="#0d4f94"/><path d="M14 14q4 3 9 0-1-6-6-8-2 4-3 8z" fill="#55d69a"/><path d="M14 12q0 3 1.500 4 3.500 2 8-1l.5 2-4 4q-6 0-8-4 0-3 2-5z" fill="#1a2a33"/></svg></div>
    <div class="slot run"><svg viewBox="0 0 24 24"><circle cx="12" cy="12" r="12" fill="#f6c915"/><path d="M12 12L1.600 6A12 12 0 0 1 22.400 6z" fill="#e13b2f"/><path d="M12 12L1.600 6A12 12 0 0 0 12 24l5-9z" fill="#2aa14c"/><circle cx="12" cy="12" r="5.700" fill="#fff"/><circle cx="12" cy="12" r="4.400" fill="#3b7de8"/></svg></div>
    <div class="slot run"><svg viewBox="0 0 24 24"><path d="M1 3h9l1 3H1z" fill="#d59a1a"/><path d="M1 5h22v15H1z" fill="#ffd76a"/><path d="M5 13h14v8h-4v-4H9v4H5z" fill="#3a8ed0"/></svg></div>
    <div class="slot"><svg viewBox="0 0 24 24"><path d="M14 1l6 2v18l-6 2-9-4 9 1V5L8 7v9l-4 2V6z" fill="#e2461b"/><path d="M4 6l4-1v11l-4 2z" fill="#c2355a"/></svg></div>
    <div class="slot run"><svg viewBox="0 0 24 24"><path d="M0 0h24v24H0z" fill="#43b163"/><path d="M2 19Q7 12 10 6 9 12 8.500 18 13 11 17 5.500 15 12 14.500 17.500 18 15 23 5" fill="none" stroke="#fff" stroke-width="1.400"/></svg></div>
    <div class="slot run"><svg viewBox="0 0 24 24"><path d="M12 0q9 10 9 16a9 8 0 0 1-18 0Q4 9 12 0z" fill="url(#drop)"/></svg></div>
    <div class="slot run act"><svg viewBox="0 0 24 24"><path d="M0 0h24v23L0 24z" fill="#fff"/><path d="M4 5l6 2v7l4-1V8l5-2v7l-8 6-7-4z" fill="#1781ad"/><path d="M11 6l3-1 5 1-5 3v4l-3 1z" fill="#2aa9bd"/></svg></div>
    <div class="tray">
      <svg viewBox="0 0 140 24"><path d="M3 15l6-6 6 6" fill="none" stroke="#fff" stroke-width="1.300"/><path d="M25 4h16v16H25z" fill="#43b163"/><path d="M27 17q3-4 5-9l-1 8q3-4 5-8l-1 8q2-2 4-8" fill="none" stroke="#fff"/><path d="M51.500 8h7v8h-7zM58.500 11l4-2v6l-4-2M53 5q4-3 8 0M53 19q4 3 8 0" fill="none" stroke="#fff" stroke-width="1.200"/><path d="M79.500 9.500h9v7h-11M74 6v3M77 6v3M72.500 9h6v3q-3 3-6 0zM75.500 14v4" fill="none" stroke="#fff" stroke-width="1.200"/><rect x="99" y="3" width="12" height="18" rx="6" fill="#1380e0"/><path d="M102 9l6 6-3 3V6l3 3-6 6" fill="none" stroke="#fff" stroke-width="1.100"/><path d="M124 18q0-10 11-12M127 19q0-9 8-10M130 19q0-6 6-6" fill="none" stroke="#aab" stroke-width="1.300"/><circle cx="134" cy="17" r="1.500" fill="#fff"/></svg>
      <svg class="vol" viewBox="0 0 18 24"><path d="M1 10h3l4-4v12l-4-4H1zM10 9q2 3 0 6M12.500 7q3 5 0 10M15 5q4 7 0 14" fill="none" stroke="#fff" stroke-width="1.100"/></svg>
      <div class="clock">1:10 PM<br>12/7/2022</div>
      <div class="notif"><svg viewBox="0 0 28 28"><path d="M2 3h16v13H8l-4 4v-4H2z" fill="#fff"/><path d="M5 7h10M5 10h10M5 13h7" stroke="#1b2b33"/><circle cx="18.500" cy="20" r="7.500" fill="#333d44" stroke="#99a"/><text x="18.500" y="24.500" text-anchor="middle">1</text></svg></div>
    </div>
  </footer>
</div>

<div class="dialog">
  <div class="dtitle">
    <svg class="plus" viewBox="0 0 14 14"><path d="M4.500 0h5v4.500H14v5H9.500V14h-5V9.500H0v-5h4.500z" fill="#d0141c"/></svg>
    Fix Wizard (Part: Hang) &gt; Diagnostics
    <svg class="dctl" viewBox="0 0 104 16"><path d="M1 7.500h10" stroke="#999"/><path d="M46.500 3.500h9v9h-9z" fill="none" stroke="#e4e4e4"/><path d="M92 3l10 10M102 3L92 13" stroke="#888" stroke-width="1.100"/></svg>
  </div>
  <div class="dbody">
    <ul class="side">
      <li class="sel"><svg viewBox="0 0 20 20"><use href="#wand"/></svg><span>Diagnostics</span></li>
      <li><svg viewBox="0 0 20 20"><g fill="#c4d8f4" stroke="#6a8cc0" stroke-width=".8"><path d="M8 3l3-1h7v12l-3 1z"/><path d="M5 5l3-1h7v12l-3 1z"/><path d="M3 7h9v11l-9-2z" fill="#dfeafa"/></g></svg><span>Combined Fix</span></li>
      <li class="rule"></li>
      <li><svg viewBox="0 0 20 20"><use href="#scube"/><path d="M11 7.500l7.500-3V15L11 18.500z" fill="#c0242c"/></svg><span>Normals</span></li>
      <li><svg viewBox="0 0 20 20"><use href="#scube" x="1" y="1" width="18" height="18"/><path d="M5 5l5-2 6 2-4 3z" fill="#f2e9b8"/><path d="M10 8l6-4" stroke="#c9a227" stroke-width="1.500"/></svg><span>Stitching</span></li>
      <li><svg viewBox="0 0 20 20"><use href="#scube"/><g fill="#1c2350"><circle cx="4" cy="8" r="1.400"/><circle cx="8" cy="12" r="1.400"/><circle cx="4" cy="14" r="1.300"/><circle cx="13" cy="9" r="1.400"/><circle cx="16" cy="13" r="1.400"/><circle cx="12" cy="15" r="1.300"/><circle cx="9" cy="3" r="1.200"/><circle cx="14" cy="4" r="1.200"/></g></svg><span>Noise Shells</span></li>
      <li><svg viewBox="0 0 20 20"><use href="#scube"/><path d="M2 4l8-2.800L18 4l-8 2.600z" fill="#b3122a"/></svg><span>Holes</span></li>
      <li><svg viewBox="0 0 20 20"><path d="M2 4l9-3 7 3v11l-8 4-8-5z" fill="#bcc8f2"/><path d="M10 8l8-4v11l-8 4z" fill="#8795d6"/><path d="M2 4l9-3 7 3-1 11-7 4-7-5zM2 4l8 4 8-4M10 8v11M2 4l8 15M18 4l-8 15" stroke="#2c3a80" stroke-width="1.100" fill="none"/></svg><span>Triangles</span></li>
      <li><svg viewBox="0 0 20 20"><path d="M1 4l9-3 8 3-8 3z" fill="#d7def5" stroke="#5a6596" stroke-width=".7"/><path d="M1 4l7 2v12l-7-3z" fill="#bcc8f2" stroke="#5a6596" stroke-width=".7"/><path d="M8 7l6-3 5 2-6 2z" fill="#d7def5" stroke="#5a6596" stroke-width=".7"/><path d="M8 7l5 1.500V19l-5-2z" fill="#a9b7ea" stroke="#5a6596" stroke-width=".7"/><path d="M19 6l-6 2.500V19l6-3z" fill="#8795d6" stroke="#5a6596" stroke-width=".7"/></svg><span>Overlaps</span></li>
      <li><svg viewBox="0 0 20 20"><use href="#scube"/></svg><span>Shells</span></li>
      <li class="rule"></li>
      <li><svg viewBox="0 0 20 20"><path d="M5 2h7l4 4v12H5z" fill="#d9f3f6" stroke="#2c8a9a" stroke-width="1.200"/><path d="M12 2v4h4" fill="none" stroke="#2c8a9a"/><path d="M7 9h6M7 12h6M7 15h6" stroke="#1f6f9a" stroke-width="1.200"/></svg><span>Profiles</span></li>
    </ul>
    <div class="dmain">
      <div class="part"><span>Current Part:</span><div class="dcombo">Hang<svg viewBox="0 0 10 6"><path d="M1 1l4 4 4-4" fill="none" stroke="#444" stroke-width="1.200"/></svg></div><div class="btnx off">Next</div></div>
      <div class="sheet">
        <div class="field adv"><h4>Advice</h4>
          <p>No more errors are detected. It seems that the part is ok. Note that not all<br>parameters were analysed.</p>
          <svg class="sb" viewBox="0 0 16 46"><path d="M0 0h16v46H0z" fill="#f0f0f0"/><path d="M4.500 11L8 7l3.500 4M4.500 36l3.500 4 3.500-4" fill="none" stroke="#a8a8a8" stroke-width="1.500"/></svg>
        </div>
        <div class="field dia"><h4>Diagnostics</h4>
          <div class="full"><i class="box"></i>Full Analysis</div>
          <div class="rows">
            <div class="r"><svg class="box"><use href="#tick" width="13" height="13"/></svg><svg class="ck"><use href="#check"/></svg><b>0</b><span>inverted normals detected</span></div>
            <div class="r"><svg class="box"><use href="#tick" width="13" height="13"/></svg><svg class="ck"><use href="#check"/></svg><b>0</b><span>bad edges detected</span></div>
            <div class="r in"><i></i><svg class="ck"><use href="#check"/></svg><b>0</b><span>bad contours detected</span></div>
            <div class="r in"><svg class="box"><use href="#tick" width="13" height="13"/></svg><svg class="ck"><use href="#check"/></svg><b>0</b><span>near bad edges detected</span></div>
            <div class="r in"><svg class="box"><use href="#tick" width="13" height="13"/></svg><svg class="ck"><use href="#check"/></svg><b>0</b><span>planar holes detected</span></div>
            <div class="r"><svg class="box"><use href="#tick" width="13" height="13"/></svg><svg class="ck"><use href="#check"/></svg><b>1</b><span>shells detected</span></div>
            <div class="r in"><i></i><svg class="ck"><use href="#check"/></svg><b>0</b><span>possible noise shells detected</span></div>
            <div class="r"><i class="box"></i><i class="dot"></i><b></b><span>overlapping triangles detected</span></div>
            <div class="r"><i class="box"></i><i class="dot"></i><b></b><span>intersecting triangles detected</span></div>
          </div>
          <div class="btnx upd"><svg viewBox="0 0 20 20"><use href="#wand"/></svg><span>Update</span></div>
        </div>
      </div>
      <div class="foot">
        <div class="btnx follow"><svg viewBox="0 0 20 18"><path d="M1 5h9V1l9 8-9 8v-4H1z" fill="#5fd04a" stroke="#1f7a1c" stroke-width="1.300" stroke-linejoin="round"/></svg><span>Follow Advice</span></div>
        <div class="btnx">Close</div><div class="btnx">Help</div>
      </div>
    </div>
  </div>
  <svg class="size" viewBox="0 0 12 12"><path d="M0 12L12 0M4 12l8-8M8 12l4-4" stroke="#888" stroke-width="1.200"/></svg>
</div>
</body>
</html>
```
FILE: styles.css
```css
* { box-sizing: border-box; }
body {
  margin: 0; width: 1920px; height: 1080px; overflow: hidden; background: #fff; color: #222;
  font: 11.5px/14px "Noto Sans", "Open Sans", sans-serif; white-space: nowrap;
}
i, b, h4 { font-style: normal; font-weight: 400; }
svg { display: block; flex: none; fill: none; }
.defs { position: absolute; }
.app { display: grid; grid-template-rows: 28px 24px 91px 879px 18px 40px; height: 1080px; }

/* title bar */
.titlebar { display: flex; align-items: flex-start; }
.quick { display: flex; align-items: center; width: 414px; height: 25px; padding-left: 4px; }
.i20 { width: 23px; height: 20px; }
.i20.on { background: #9fc9ee; height: 22px; }
.undo { width: 32px; height: 20px; }
.qsep { width: 1px; height: 18px; background: #ddd; margin: 0 2.550px; }
.search { width: 200px; height: 20px; margin-top: 3px; border: 1px solid #aaa; padding: 2px 3px; color: #666; font-size: 11.6px; }
.apptitle { width: 692px; text-align: center; padding: 7px 0 0; color: #111; font-size: 11px; }
.winctl { width: 92px; height: 20px; margin-left: 519px; margin-top: 3px; }

/* ribbon tabs */
.tabs {
  display: grid; border-bottom: 1px solid #d0d0d0; color: #222; font-size: 11.3px; padding-left: 1px;
  grid-template-columns: 51px 60px 37px 67px 72px 125px 140px 128px 66px 44px 122px 1fr;
}
.tabs b { text-align: center; line-height: 25px; overflow: visible; letter-spacing: -.25px; }
.tabs b.tight { letter-spacing: -.45px; }
.tabs .file { background: #2b99fb; color: #fff; height: 23px; line-height: 23px; }
.tabs .cur { margin: 0 0 -1px 3px; border: 1px solid #d0d0d0; border-bottom: 0; background: #fff; color: #4a6a80; line-height: 24px; letter-spacing: -.1px; }
.tabctl { width: 44px; height: 24px; justify-self: end; }

/* ribbon */
.ribbon { display: flex; border-bottom: 1px solid #ccc; border-left: 1px solid #ddd; }
.grp { display: flex; flex-direction: column; justify-content: space-between; border-right: 1px solid #d4d4d4; }
.btns { display: grid; padding-top: 7px; height: 68px; }
.btn { display: flex; flex-direction: column; align-items: center; }
.btn svg { width: 32px; height: 32px; overflow: visible; }
.btn span { margin-top: 3px; text-align: center; font-size: 11px; line-height: 13px; color: #3a3a3a; }
.btn.dis span { color: #999; }
.car { border: 3px solid transparent; border-top: 3px solid #2b6a8a; border-bottom: 0; margin-top: 5px; }
.dis .car { border-top-color: #bbb; }
.cap { text-align: center; color: #3a3a3a; height: 18px; font-size: 11px; padding-left: 3px; }
.k { fill: #fff; stroke: #3c3c3c; stroke-width: 1.6px; }
.g { fill: #fff; stroke: #999; stroke-width: 1.8px; }
.kt { stroke: #444; stroke-width: 2px; }
.cl { font: bold 6px "Noto Sans", sans-serif; fill: #aaa; }
.g1 { width: 168px; } .g1 .btns { grid-template-columns: 49px 49px 69px; }
.g2 { width: 196px; } .g2 .btns { grid-template-columns: 62px 33px 58px 34px; padding-left: 0; }
.g3 { width: 382px; } .g3 .btns { grid-template-columns: 44px 46px 58px 58px 46px 1fr; padding-left: 7px; }
.g4 { width: 151px; } .g4 .btns { grid-template-columns: 40px 50px 45px; padding-left: 7px; }
.g5 { width: 116px; } .g5 .btns { grid-template-columns: 43px 62px; padding-left: 2px; }
.g6 { width: 292px; } .g6 .btns { grid-template-columns: 70px 64px 63px 83px; padding-left: 6px; }
.g7 { width: 111px; } .g7 .btns { grid-template-columns: 45px 56px; padding-left: 8px; }
.g8 { width: 104px; } .g8 .btns { padding-left: 1px; }
.list { display: grid; grid-template-rows: 22px 22px 22px; margin-top: -2px; padding-left: 6px; font-size: 11px; color: #3a3a3a; }
.list div { display: flex; align-items: center; gap: 6px; }
.list svg { width: 20px; height: 22px; }

/* workspace */
.work { display: grid; grid-template-columns: 1530px 384px; column-gap: 6px; }
.left { display: grid; grid-template-rows: 35px 808px 36px; }
.toolbar { display: flex; align-items: center; padding: 0 0 0 4px; }
.grip { width: 2px; height: 22px; margin-right: 4.500px; background: repeating-linear-gradient(#222 0 2px, transparent 2px 4px); }
.t { width: 24px; height: 24px; margin: 0 3.500px; overflow: visible; }
.sep { width: 1px; height: 24px; margin: 0 2.500px; background: #ddd; }
.gr { fill: #8bc34a; stroke: #444; stroke-width: 1.3; }
.gl { fill: none; stroke: #444; stroke-width: 1.2; }
.dg { fill: #c2c2c2; stroke: #888; stroke-width: 1.3; }
.cb { fill: #333; } .ct { stroke: #fff; stroke-width: 1.5; fill: none; }
.viewport { position: relative; background: #b9defb; }
.model { position: absolute; left: 640px; top: 132px; width: 240px; height: 340px; }
.axes { position: absolute; left: 1365px; top: 626px; width: 150px; height: 90px; }
.ruler { width: 1530px; height: 36px; }
.num text { font: 12px "Liberation Sans", sans-serif; fill: #111; text-anchor: middle; }

/* right panel */
.panel { display: flex; flex-direction: column; border-left: 1px solid #e8e8e8; color: #111; font-size: 11px; }
.sec { display: flex; align-items: center; height: 27px; padding: 0 8px 0 5px; flex: none; font-size: 11px; }
.s2 { height: 24px; border-top: 1px solid #e6e6e6; }
.s3 { height: 28px; border-top: 2px solid #ececec; }
.sec.tight { letter-spacing: -.15px; }
.tri { border: 6px solid transparent; border-left: 7px solid #000; border-right: 0; margin: 0 13px 0 1px; }
.tri.down { border: 6px solid transparent; border-top: 7px solid #000; border-bottom: 0; margin: 0 10px 0 -1px; }
.dots {
  flex: 1; height: 5px; margin: 0 8px 0 5px;
  background: conic-gradient(at 1px 1px, transparent 75%, #333 0) 0 0/4px 4px, conic-gradient(at 1px 1px, transparent 75%, #333 0) 2px 2px/4px 4px;
}
.sec b { width: 9px; text-align: center; font: bold 14px/10px "Noto Sans", sans-serif; color: #000; padding-bottom: 2px; }
.pin { width: 10px; height: 10px; margin-right: 9px; }
.ptabs { display: grid; flex: none; height: 19px; line-height: 21px; text-align: center; font-size: 11px; }
.ptabs .sel { border: 1px solid #999; border-bottom: 0; margin-left: 1px; line-height: 18px; padding-right: 2px; }
.pt1 { height: 21px; padding: 1px 0 0; grid-template-columns: 74px 89px 75px 70px; }
.pt2 { height: 26px; line-height: 26px; padding-left: 64px; grid-template-columns: 60px 117px 109px 15px 17px; align-items: center; }
.pt2 > span { padding-bottom: 2px; }
.pt3 { grid-template-columns: 74px 72px 90px 70px; }
.pt4 { grid-template-columns: 68px 49px 57px 41px 77px 55px; }
.pt5 { height: 20px; grid-template-columns: 61px 47px 49px 63px 53px 60px 17px 15px 17px; }
.clip { overflow: hidden; text-align: left; padding-left: 4px; }
.pt5 .clip { padding-left: 11px; }
.arr { height: 20px; border: 1px solid #777; display: grid; place-items: center; }
.arr i { border: 5px solid transparent; border-left: 6px solid #000; border-right: 0; }
.arr.off { border-color: #ddd; } .arr.off i { border-left: 0; border-right: 6px solid #999; }
.filter { display: flex; align-items: center; height: 23px; flex: none; }
.combo { width: 270px; height: 21px; margin-left: 3px; padding: 2px 6px 0 73px; border: 1px solid #999; display: flex; justify-content: space-between; font-size: 11px; }
.combo i { border: 3px solid transparent; border-top: 3px solid #555; border-bottom: 0; height: 3px; margin-top: 7px; }
.filter span { margin-left: 6px; font-size: 11px; }
.table { height: 567px; margin: 4px 5px 0 3px; border: 1px solid #888; flex: none; }
.tr { display: grid; grid-template-columns: 76px 33px 36px 25px 30px 70px 1fr; height: 21px; align-items: center; font-size: 11px; }
.th > span { padding: 0 0 0 1px; border-left: 1px solid #ececec; overflow: hidden; text-indent: 2px; height: 21px; line-height: 22px; }
.th > span:nth-child(3) { margin-left: -1px; }
.th > span:nth-child(5) { margin-right: 4px; }
.row { height: 19px; background: linear-gradient(#fff, #fff) 201px 0/10px 19px no-repeat #cce8ff; margin-top: 1px; }
.row svg { width: 16px; height: 16px; margin-left: 9px; }
.row .tr8 { margin-left: 11px; }
.row .mem { margin-left: 8px; }
.row .ok { margin-left: 3px; }
.row .col { width: 22px; height: 18px; margin-left: 2px; }
.nm { padding-left: 13px; }
.ptools { display: flex; align-items: center; height: 44px; padding: 3px 0 0 4px; flex: none; }

/* status and taskbar */
.status { background: #2e99fb; color: #eaf5ff; font-size: 11px; line-height: 19px; padding-left: 6px; }
.taskbar { display: flex; background: linear-gradient(#0e2f48, #1b2b32 8px); }
.slot { width: 49px; display: grid; place-items: center; }
.slot svg { width: 24px; height: 24px; }
.slot.run { background: linear-gradient(#82b8e2, #82b8e2) center bottom/40px 2px no-repeat; }
.slot.act { background: linear-gradient(#82b8e2, #82b8e2) center bottom/49px 2px no-repeat #46545c; }
.slot:first-child { width: 50px; padding-right: 1px; }
.tray { display: flex; align-items: center; margin-left: auto; color: #fff; }
.tray svg { width: 140px; height: 24px; }
.tray svg.vol { width: 18px; margin-left: 3px; }
.clock { width: 72px; text-align: center; font-size: 11.2px; line-height: 18px; }
.notif { padding: 0 10px 0 6px; border-right: 1px solid #55646e; height: 40px; margin-right: 4px; display: grid; place-items: center; }
.notif svg { width: 28px; height: 28px; }
.notif text { font: 12px "Noto Sans", sans-serif; fill: #fff; }

/* fix wizard */
.dialog {
  position: absolute; left: 1004px; top: 211px; width: 616px; height: 569px; background: #f0f0f0;
  border: 1px solid #7a8a98; box-shadow: 2px 4px 10px rgba(0,0,0,.35); color: #111; font-size: 11.3px;
}
.dtitle { display: flex; align-items: center; gap: 6px; height: 30px; background: #fff; color: #8a8a8a; padding-left: 9px; font-size: 11.4px; }
.plus { width: 14px; height: 14px; }
.dctl { width: 104px; height: 16px; margin-left: auto; margin-right: 16px; }
.dbody { display: grid; grid-template-columns: 121px 1fr; padding: 4px 0 0 4px; }
.side { margin: 0; list-style: none; background: #fff; border: 1px solid #777; outline: 1px solid #fff; height: 528px; padding: 2px 5px 0 2px; box-shadow: inset 1px 1px #fff, inset 2px 2px #888; }
.side li { display: flex; height: 21px; align-items: center; gap: 3px; padding-left: 3px; color: #1a1a1a; font-size: 11.5px; }
.side svg { width: 20px; height: 20px; }
.side li span { flex: 1; line-height: 20px; }
.side .sel span { background: #efefef; }
.side .rule { background: linear-gradient(#888, #888) 0 10px/100% 1px no-repeat; }
.dmain { padding: 0 0 0 8px; }
.part { display: flex; height: 32px; font-size: 11.3px; }
.part > span { width: 77px; padding: 0 0 0 2px; line-height: 12px; }
.dcombo { width: 350px; height: 21px; border: 1px solid #aaa; background: #e2e2e2; padding: 0 3px 0 3px; display: flex; align-items: center; justify-content: space-between; }
.dcombo svg { width: 10px; height: 6px; }
.btnx { border: 1px solid #a9a9a9; background: #e2e2e2; display: flex; align-items: center; justify-content: center; height: 25px; font-size: 11px; }
.part .off { width: 44px; height: 22px; margin: 1px 0 0 5px; background: #ccc; border-color: #bbb; color: #8a8a8a; font-size: 11.3px; }
.sheet { width: 473px; height: 382px; border: 1px solid #a8a8a8; border-radius: 4px; background: linear-gradient(#fff, #f0f0f0 60%); padding: 25px 9px 0; }
.field { border: 1px solid #dcdcdc; }
.field h4 { margin: -7px 0 0 5px; padding: 0 4px; background: #fdfdfd; width: max-content; line-height: 14px; font-size: 11.1px; }
.adv { height: 69px; display: grid; grid-template: 14px 1fr / 425px 16px; }
.adv h4 { grid-column: 1/3; margin-top: -7px; }
.adv p { margin: -1px 0 0 12px; line-height: 13px; font-size: 11px; letter-spacing: -.05px; }
.adv .sb { width: 16px; height: 46px; margin-top: -1px; }
.dia { height: 265px; margin-top: 11px; }
.full { display: flex; align-items: center; gap: 3px; height: 14px; margin: 7px 0 0 9px; font-size: 11px; }
.box { width: 13px; height: 13px; border: 1px solid #333; background: #fff; flex: none; }
.rows { margin: 12px 0 0 29px; }
.r { display: grid; grid-template-columns: 20px 20px 45px auto; height: 20px; align-items: center; font-size: 11px; }
.r.in { margin-left: 20px; }
.ck { width: 16px; height: 18px; }
.ck use { width: 16px; height: 18px; }
.dot { width: 4px; height: 4px; border-radius: 2px; background: #2a2aa0; margin-left: 6px; }
.r b { font-weight: 700; }
.upd { width: 112px; margin: 10px 0 0 331px; height: 25px; justify-content: flex-start; padding-left: 3px; }
.upd svg { width: 20px; height: 20px; }
.upd span { margin-left: 22px; }
.foot { display: flex; margin: 90px 0 0 182px; gap: 6px; }
.foot .btnx { width: 59px; height: 25px; }
.foot .follow { width: 150px; justify-content: flex-start; padding-left: 3px; }
.follow svg { width: 21px; height: 18px; }
.follow span { margin-left: 24px; }
.size { position: absolute; right: 0; bottom: 0; width: 12px; height: 12px; }
```
